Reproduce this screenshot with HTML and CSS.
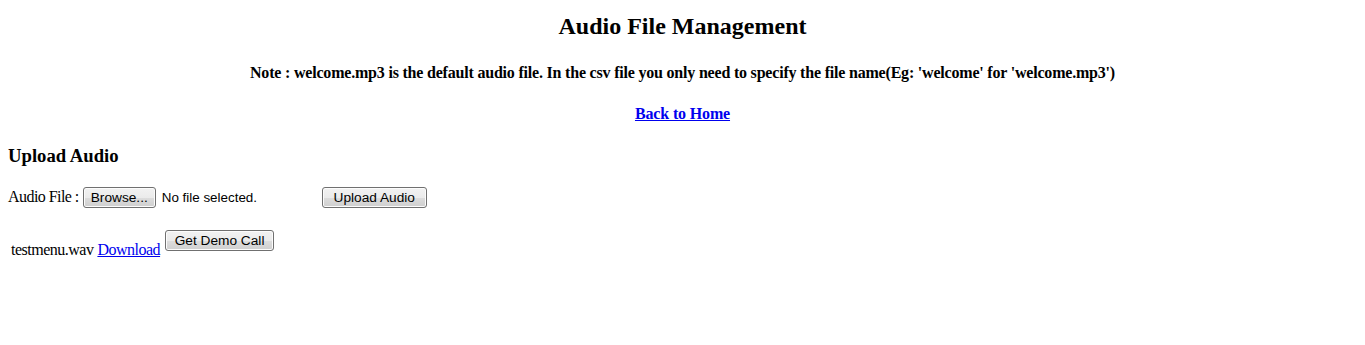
FILE: index.html
```html
<!DOCTYPE html>
<html>
<head>
<meta charset="utf-8">
<title>Audio File Management</title>
<link rel="stylesheet" href="styles.css">
</head>
<body>
<h2 class="title">Audio File Management</h2>
<h4 class="note">Note : welcome.mp3 is the default audio file. In the csv file you only need to specify the file name(Eg: 'welcome' for 'welcome.mp3')</h4>
<p class="back"><a href="#">Back to Home</a></p>
<h3 class="section">Upload Audio</h3>
<form class="upload">
  <span class="label">Audio File :</span>
  <span class="btn browse">Browse...</span>
  <span class="nofile">No file selected.</span>
  <span class="btn upload-btn">Upload Audio</span>
</form>
<div class="filerow">
  <span class="fname">testmenu.wav</span>
  <a href="#" class="dl">Download</a>
  <span class="btn demo">Get Demo Call</span>
</div>
</body>
</html>
```
FILE: styles.css
```css
html, body { margin: 0; padding: 0; background: #fff; }
body {
  padding: 8px;
  font-family: "Liberation Serif", "Times New Roman", serif;
  font-size: 16px;
  color: #000;
}
.title {
  font-size: 24px;
  font-weight: bold;
  text-align: center;
  margin: 4px 0 0 0;
  line-height: 28px;
}
.note {
  font-size: 16px;
  font-weight: bold;
  letter-spacing: -0.2px;
  text-align: center;
  margin: 23px 0 0 0;
  line-height: 20px;
}
.back {
  text-align: center;
  font-weight: bold;
  letter-spacing: -0.15px;
  margin: 21px 0 0 0;
  line-height: 20px;
}
a { color: #0000ee; text-decoration: underline; }
.section {
  font-size: 18.7px;
  font-weight: bold;
  margin: 21px 0 0 0;
  line-height: 22px;
}
.upload {
  display: flex;
  align-items: center;
  margin: 19px 0 0 0;
  height: 22px;
}
.label { margin-right: 4px; letter-spacing: -0.55px; }
.btn {
  display: inline-flex;
  align-items: center;
  justify-content: center;
  box-sizing: border-box;
  height: 21px;
  padding: 0;
  font-family: "Liberation Sans", Arial, sans-serif;
  font-size: 13.7px;
  color: #000;
  border: 1px solid #707070;
  border-radius: 3px;
  background: linear-gradient(#f2f2f2 0%, #ebebeb 50%, #dddddd 51%, #cfcfcf 100%);
  box-shadow: inset 0 0 0 1px #fcfcfc;
}
.browse { width: 73px; }
.nofile {
  font-family: "Liberation Sans", Arial, sans-serif;
  font-size: 13.4px;
  margin-left: 6px;
  width: 160px;
}
.upload-btn { width: 105px; }
.filerow {
  display: flex;
  align-items: flex-end;
  margin: 22px 0 0 3px;
  height: 29px;
}
.fname { line-height: 18px; letter-spacing: -0.5px; }
.dl { margin-left: 4px; line-height: 18px; letter-spacing: -0.5px; }
.demo { width: 109px; margin-left: 5px; align-self: flex-start; }
```
